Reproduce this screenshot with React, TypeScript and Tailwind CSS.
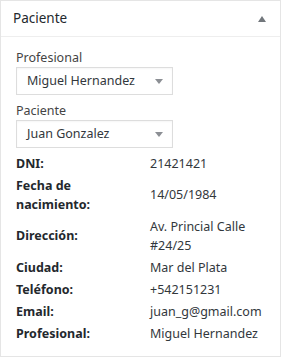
const rows: { label: string[]; value: string[] }[] = [
  { label: ["DNI:"], value: ["21421421"] },
  { label: ["Fecha de", "nacimiento:"], value: ["14/05/1984"] },
  { label: ["Dirección:"], value: ["Av. Princial Calle", "#24/25"] },
  { label: ["Ciudad:"], value: ["Mar del Plata"] },
  { label: ["Teléfono:"], value: ["+542151231"] },
  { label: ["Email:"], value: ["juan_g@gmail.com"] },
  { label: ["Profesional:"], value: ["Miguel Hernandez"] },
];

function FakeSelect({ value }: { value: string }) {
  return (
    <div className="flex h-[28px] w-[157px] items-center justify-between border border-[#dddddd] bg-white pl-[10px] pr-[9px] text-[#32373c] shadow-[inset_0_1px_2px_rgba(0,0,0,0.04)]">
      <span>{value}</span>
      <span className="h-0 w-0 border-x-[4px] border-t-[5px] border-x-transparent border-t-[#8c8f94]" />
    </div>
  );
}

export default function App() {
  return (
    <div
      className="h-[357px] w-[281px] bg-white text-[12.5px] text-[#444]"
      style={{ fontFamily: '"Noto Sans", "Open Sans", sans-serif' }}
    >
      <div className="h-full border border-[#e5e5e5]">
        <div className="flex h-[36px] items-center justify-between border-b border-[#eeeeee] pl-[12px] pr-[14px]">
          <h2 className="text-[13.5px] text-[#23282d]">Paciente</h2>
          <span className="h-0 w-0 border-x-[4px] border-b-[6px] border-x-transparent border-b-[#72777c]" />
        </div>

        <div className="px-[15px] pt-[12px]">
          <div className="leading-[18px] text-[#444]">Profesional</div>
          <FakeSelect value="Miguel Hernandez" />

          <div className="mt-[7px] leading-[18px] text-[#444]">Paciente</div>
          <FakeSelect value="Juan Gonzalez" />

          <div className="mt-[4px] grid grid-cols-[134px_1fr]">
            {rows.map((r) => (
              <div key={r.label.join(" ")} className="contents">
                <div className="flex flex-col justify-center py-[1.5px] font-bold leading-[19px] text-[#23282d]">
                  {r.label.map((l) => (
                    <span key={l}>{l}</span>
                  ))}
                </div>
                <div className="flex flex-col justify-center py-[1.5px] leading-[19px] text-[#32373c]">
                  {r.value.map((v) => (
                    <span key={v}>{v}</span>
                  ))}
                </div>
              </div>
            ))}
          </div>
        </div>
      </div>
    </div>
  );
}
